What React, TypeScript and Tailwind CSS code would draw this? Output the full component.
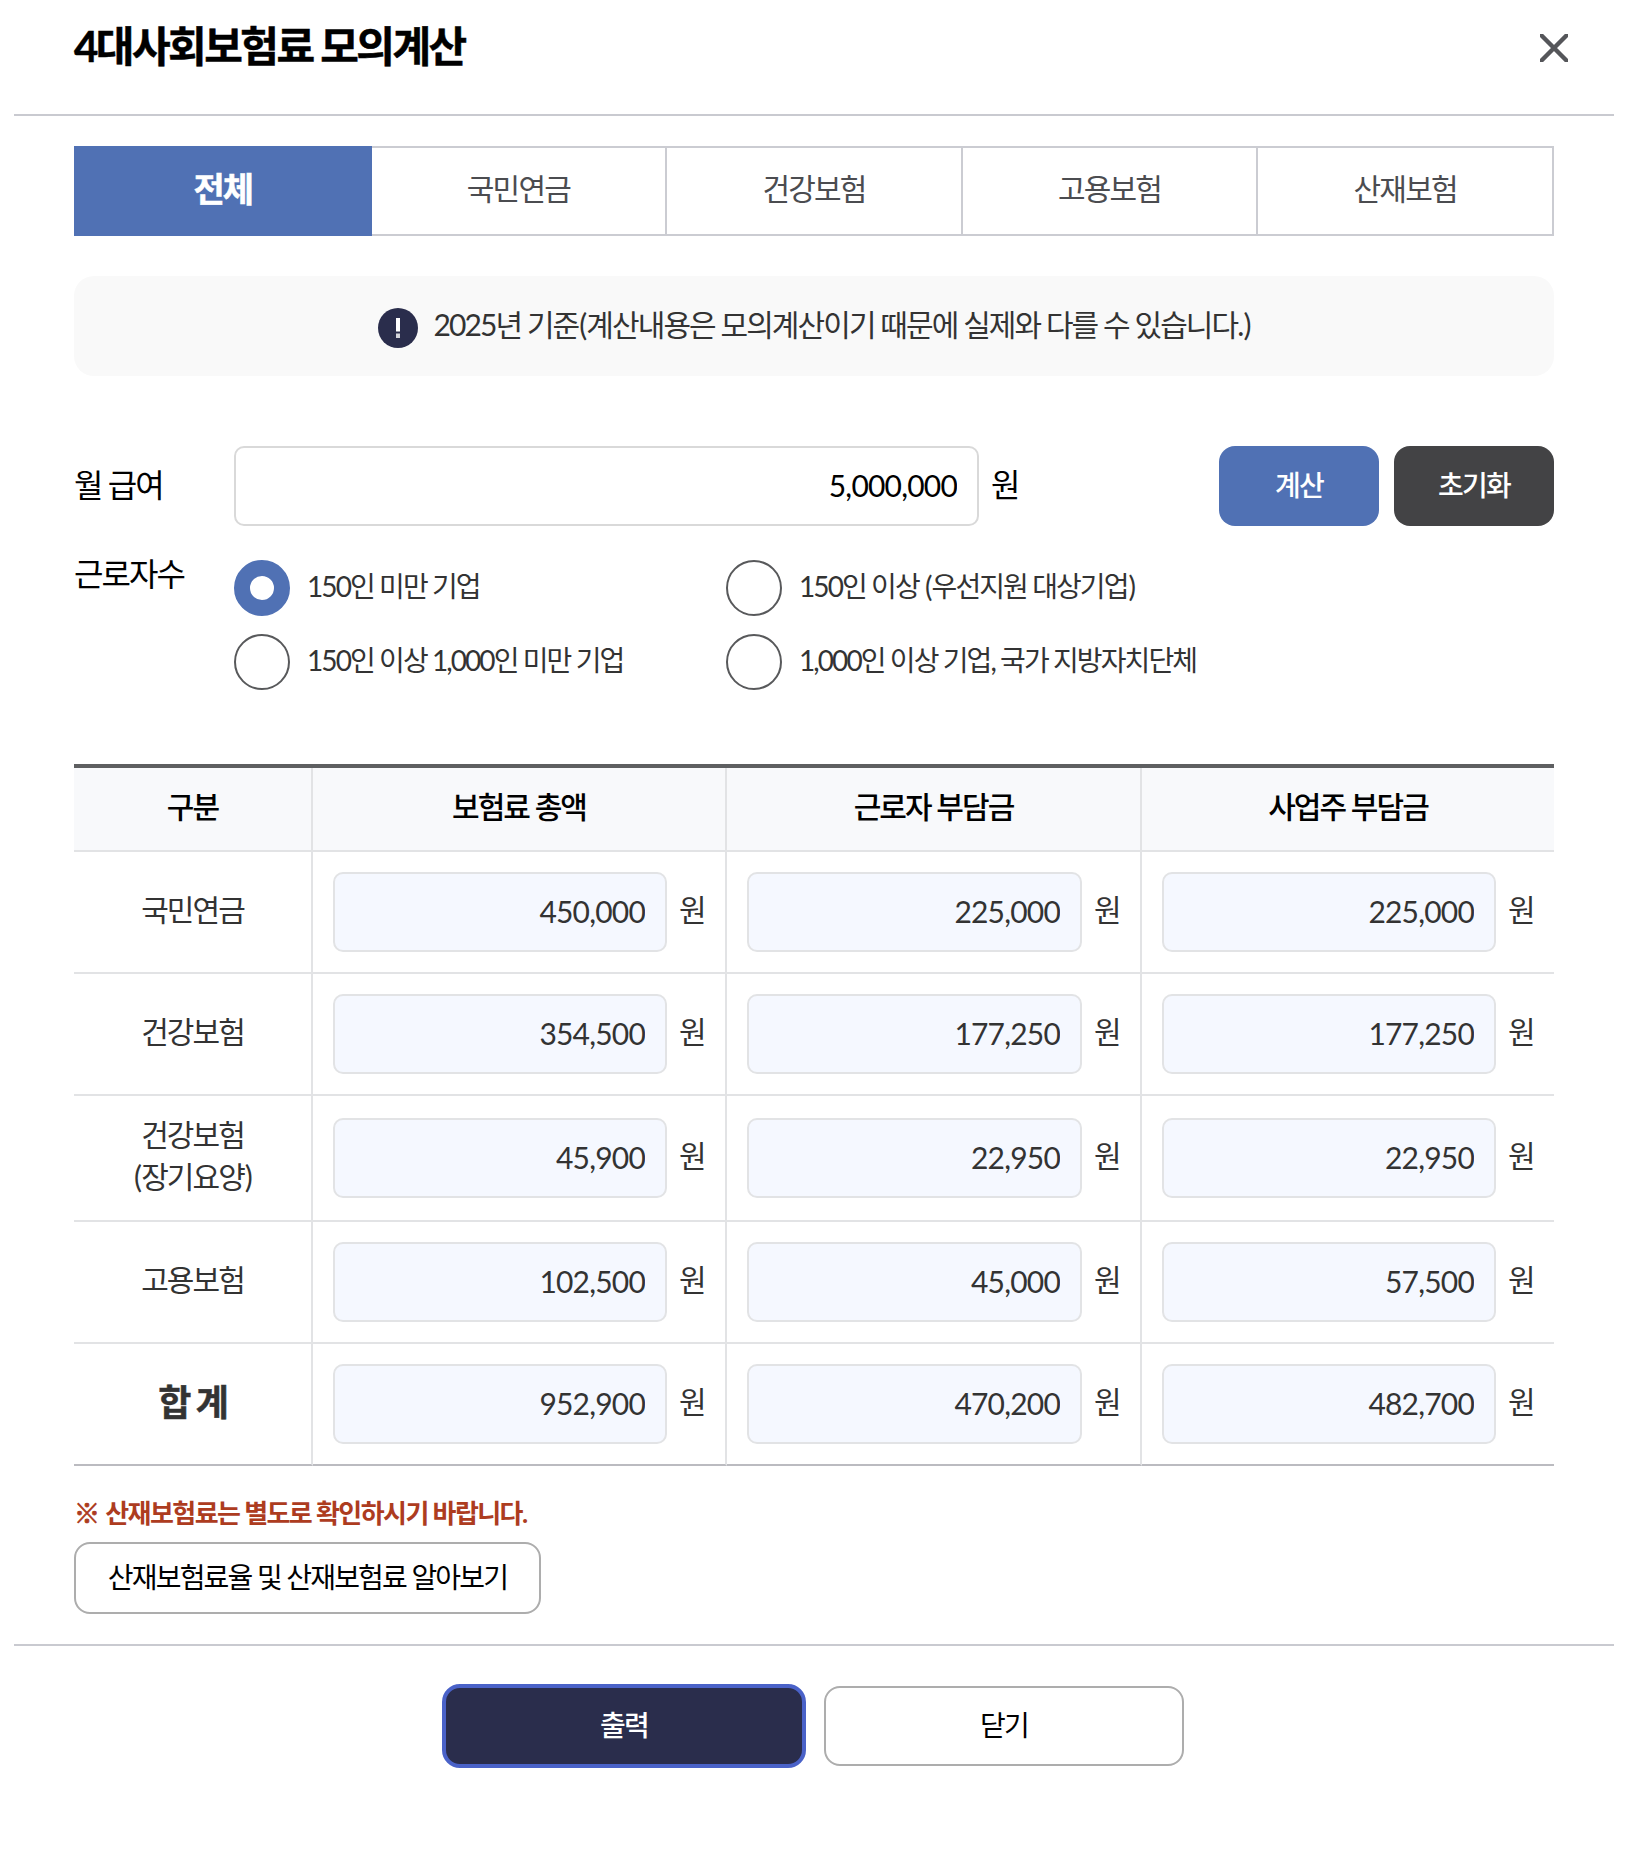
import React, { useState } from 'react';

interface InsuranceRow {
  label: string[];
  total: string;
  worker: string;
  employer: string;
  sum?: boolean;
}

const tabs = ['전체', '국민연금', '건강보험', '고용보험', '산재보험'];

const companySizes = [
  '150인 미만 기업',
  '150인 이상 (우선지원 대상기업)',
  '150인 이상 1,000인 미만 기업',
  '1,000인 이상 기업, 국가 지방자치단체',
];

const columns = ['구분', '보험료 총액', '근로자 부담금', '사업주 부담금'];

const rows: InsuranceRow[] = [
  { label: ['국민연금'], total: '450,000', worker: '225,000', employer: '225,000' },
  { label: ['건강보험'], total: '354,500', worker: '177,250', employer: '177,250' },
  { label: ['건강보험', '(장기요양)'], total: '45,900', worker: '22,950', employer: '22,950' },
  { label: ['고용보험'], total: '102,500', worker: '45,000', employer: '57,500' },
  { label: ['합 계'], total: '952,900', worker: '470,200', employer: '482,700', sum: true },
];

// gives parentheses a little more room next to Hangul
function Spaced({ text }: { text: string }) {
  return (
    <>
      {text.split(/([()])/).map((part, i) =>
        part === '(' || part === ')' ? <span key={i} className="px-px">{part}</span> : part
      )}
    </>
  );
}

function AmountCell({ value }: { value: string }) {
  return (
    <div className="flex items-center pl-5">
      <input
        readOnly
        value={value}
        className="h-20 min-w-0 flex-1 rounded-[10px] border-2 border-[#e2e3e5] bg-[#f5f8ff] pb-[3px] pr-5 text-right text-[30px] tracking-[-0.8px] text-[#333] outline-none"
      />
      <span className="w-[58px] pb-1.5 pl-3">원</span>
    </div>
  );
}

export default function App() {
  const [activeTab, setActiveTab] = useState(0);
  const [size, setSize] = useState(0);
  const [salary, setSalary] = useState('5,000,000');

  return (
    <div className="h-[1850px] w-[1626px] bg-white pl-[14px] pr-3 font-['Lato','Noto_Sans_CJK_KR',sans-serif] tracking-[-1.92px] text-black">
      <header className="flex h-[116px] items-start justify-between border-b-2 border-[#c9cad0] pl-[60px] pr-[46px]">
        <h1 className="mt-[22px] text-[42px] font-bold leading-[48px] tracking-[-0.06em] [-webkit-text-stroke:0.5px]">
          4대사회보험료 모의계산
        </h1>
        <button className="mt-[34px]" aria-label="닫기">
          <svg width="28" height="28" viewBox="0 0 28 28" stroke="#55565a" strokeWidth="4.4">
            <path d="M0 0L28 28M28 0L0 28" />
          </svg>
        </button>
      </header>

      <main className="pl-[60px] pr-[60px]">
        <nav className="mt-[30px] flex h-[90px]">
          {tabs.map((tab, i) => (
            <button
              key={tab}
              onClick={() => setActiveTab(i)}
              className={
                i === activeTab
                  ? 'relative z-10 w-[297.6px] shrink-0 bg-[#5071b4] pb-1.5 text-[34px] font-bold tracking-[-0.06em] text-white [-webkit-text-stroke:0.5px]'
                  : '-ml-0.5 w-[297.6px] shrink-0 border-2 border-[#cbccd2] pb-1.5 text-[30px] tracking-[-0.06em] text-[#4b4c50]'
              }
            >
              {tab}
            </button>
          ))}
        </nav>

        <div className="mt-10 flex h-[100px] items-center justify-center rounded-[20px] bg-[#f9f9f9]">
          <svg className="mt-1 mr-4" width="40" height="40" viewBox="0 0 40 40">
            <circle cx="20" cy="20" r="20" fill="#2a2d4c" />
            <rect x="18" y="10" width="4" height="13.5" fill="#fff" />
            <rect x="18" y="25.5" width="4" height="4.5" fill="#d4d5dc" />
          </svg>
          <p className="pb-1 text-[30px] leading-[44px] text-[#333]">
            <Spaced text="2025년 기준(계산내용은 모의계산이기 때문에 실제와 다를 수 있습니다.)" />
          </p>
        </div>

        <div className="mt-[70px] flex h-20 items-center text-[32px]">
          <label htmlFor="salary" className="w-40 pb-0.5">월 급여</label>
          <input
            id="salary"
            value={salary}
            onChange={(e) => setSalary(e.target.value)}
            className="h-20 w-[745px] rounded-[10px] border-2 border-[#d9d9d9] pb-[3px] pr-5 text-right text-[30px] tracking-[-0.8px] outline-none"
          />
          <span className="ml-3 pb-0.5">원</span>
          <div className="ml-auto flex gap-[15px] text-[28px] font-medium text-white">
            <button className="h-20 w-40 rounded-2xl bg-[#5071b4] pb-0.5 tracking-[-0.06em]">계산</button>
            <button className="h-20 w-40 rounded-2xl bg-[#434345] pb-0.5 tracking-[-0.06em]">초기화</button>
          </div>
        </div>

        <div className="mt-[34px] flex">
          <span className="-mt-1.5 w-40 text-[32px] leading-[40px]">근로자수</span>
          <div className="grid grid-cols-[492px_auto] gap-y-[18px]">
            {companySizes.map((name, i) => (
              <label key={name} className="flex h-14 items-center text-[28px] text-[#333]">
                <input
                  type="radio"
                  name="size"
                  checked={i === size}
                  onChange={() => setSize(i)}
                  className="mr-[17px] size-14 appearance-none rounded-full border-2 border-[#58595b] bg-white checked:border-16 checked:border-[#5071b4]"
                />
                <span className="pb-1"><Spaced text={name} /></span>
              </label>
            ))}
          </div>
        </div>

        <table className="mt-[74px] w-[1480px] table-fixed border-separate border-spacing-0 border-t-4 border-[#5e5f61] text-[30px] text-[#333]">
          <colgroup>
            <col className="w-[239px]" />
            <col className="w-[414px]" />
            <col className="w-[415px]" />
            <col className="w-[412px]" />
          </colgroup>
          <thead>
            <tr className="h-[84px] bg-[#f8f9fb] text-black">
              {columns.map((col) => (
                <th key={col} className="border-b-2 border-r-2 border-[#e2e3e5] p-0 pb-[5px] font-medium last:border-r-0">
                  {col}
                </th>
              ))}
            </tr>
          </thead>
          <tbody>
            {rows.map((row) => (
              <tr key={row.label.join('')} className={row.label.length > 1 ? 'group h-[126px]' : 'group h-[122px]'}>
                <td className="border-b-2 border-r-2 border-[#e2e3e5] p-0 pb-1.5 text-center leading-[42px] group-last:border-b-[#bbbbc0]">
                  {row.label.map((line) => (
                    <div key={line} className={row.sum ? 'pt-0.5 text-[36px] font-bold tracking-[-0.06em] [-webkit-text-stroke:0.5px]' : ''}>
                      <Spaced text={line} />
                    </div>
                  ))}
                </td>
                {[row.total, row.worker, row.employer].map((value, i) => (
                  <td key={i} className="border-b-2 border-r-2 border-[#e2e3e5] p-0 last:border-r-0 group-last:border-b-[#bbbbc0]">
                    <AmountCell value={value} />
                  </td>
                ))}
              </tr>
            ))}
          </tbody>
        </table>

        <p className="mt-[27px] text-[26px] font-bold leading-[40px] tracking-[-0.06em] text-[#ad3c1f]">
          <span className="mr-0.5 [-webkit-text-stroke:0.8px]">※</span> 산재보험료는 별도로 확인하시기 바랍니다.
        </p>
        <button className="mt-[9px] block h-[72px] w-[467px] rounded-2xl border-2 border-[#adadad] pb-0.5 text-[28px] tracking-[-1.8px]">
          산재보험료율 및 산재보험료 알아보기
        </button>
      </main>

      <footer className="mt-[30px] flex justify-center gap-[18px] border-t-2 border-[#c9cad0] pr-0.5 pt-[38px] text-[28px]">
        <button className="h-[84px] w-[364px] rounded-[18px] border-4 border-[#4a62c8] bg-[#2a2d4c] pb-0.5 font-medium tracking-[-0.06em] text-white">
          출력
        </button>
        <button className="mt-0.5 h-20 w-[360px] rounded-2xl border-2 border-[#adadad] pb-0.5 tracking-[-0.06em]">닫기</button>
      </footer>
    </div>
  );
}
